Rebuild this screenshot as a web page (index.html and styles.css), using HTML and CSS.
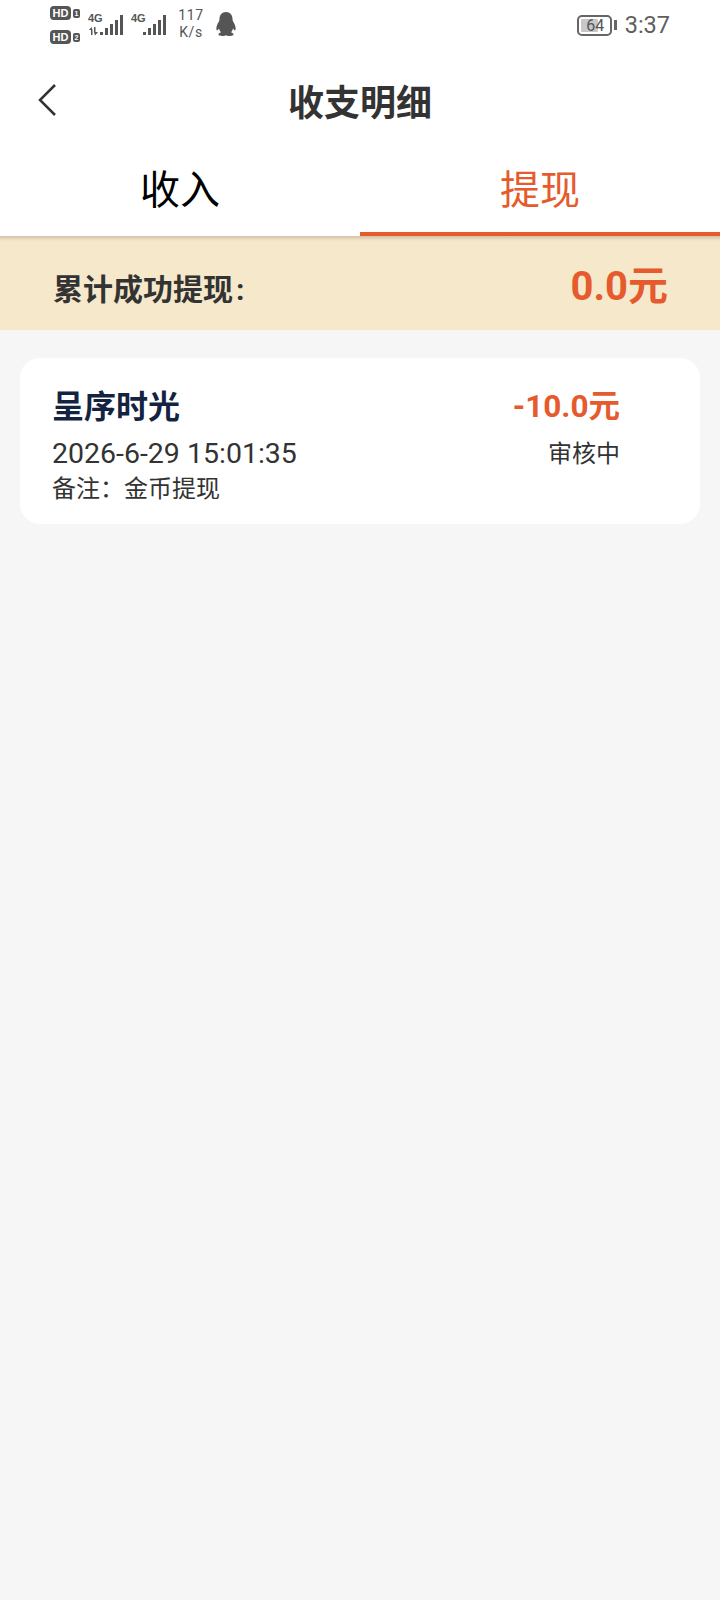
FILE: index.html
```html
<!DOCTYPE html>
<html lang="zh-CN">
<head>
<meta charset="utf-8">
<title>收支明细</title>
<link rel="stylesheet" href="styles.css">
</head>
<body>
<div class="status">
  <div class="status-left">
    <div class="hd-col">
      <div class="hd-row"><span class="hd">HD</span><span class="sim">1</span></div>
      <div class="hd-row"><span class="hd">HD</span><span class="sim">2</span></div>
    </div>
    <svg class="signal" width="36" height="30" viewBox="0 0 36 30" fill="#555">
      <text class="net" x="0" y="11">4G</text>
      <path d="M3 24v-5H1l2.500-3 1 3v5zM6 16h1.500v5H10l-3 3.500-1-3.500z"/>
      <rect x="12" y="21" width="3" height="3"/><rect x="17" y="17" width="3" height="7"/><rect x="22" y="13" width="3" height="11"/><rect x="27" y="9" width="3" height="15"/><rect x="32" y="4" width="3" height="20"/>
    </svg>
    <svg class="signal" width="36" height="30" viewBox="0 0 36 30" fill="#555">
      <text class="net" x="0" y="11">4G</text>
      <rect x="12" y="21" width="3" height="3"/><rect x="17" y="17" width="3" height="7"/><rect x="22" y="13" width="3" height="11"/><rect x="27" y="9" width="3" height="15"/><rect x="32" y="4" width="3" height="20"/>
    </svg>
    <div class="speed"><span>117</span><span>K/s</span></div>
    <svg class="qq" width="22" height="26" viewBox="0 0 22 26" fill="#555">
      <path d="M11 1c-4 0-6.500 3-6.500 7 0 1.500-.5 2.500-1.500 4-1.200 2-2 5-1.500 7 .5.800 1.500 0 2.500-1.500.3 1.500 1 2.800 2 3.700-1.500.6-2.500 1.300-2.500 2.300 0 1.300 3 1.500 5 1.500 1 0 1.700-.3 2.500-.8.800.5 1.500.8 2.500.8 2 0 5-.2 5-1.500 0-1-1-1.700-2.500-2.300 1-.9 1.700-2.200 2-3.700 1 1.500 2 2.300 2.500 1.500.5-2-.3-5-1.500-7-1-1.500-1.500-2.500-1.500-4 0-4-2.500-7-6.500-7z"/>
    </svg>
  </div>
  <div class="status-right">
    <div class="battery"><span class="battery-fill"></span><span class="battery-num">64</span></div>
    <span class="battery-cap"></span>
    <span class="clock">3:37</span>
  </div>
</div>

<header class="nav">
  <svg class="back" width="20" height="34" viewBox="0 0 20 34" fill="none" stroke="#333" stroke-width="2.500">
    <path d="M17 2 2 17l15 15"/>
  </svg>
  <h1 class="title">收支明细</h1>
</header>

<div class="tabs">
  <div class="tab">收入</div>
  <div class="tab tab-active">提现</div>
</div>

<section class="summary">
  <span class="summary-label">累计成功提现<span class="colon">:</span></span>
  <span class="summary-value">0.0元</span>
</section>

<section class="card">
  <div class="card-left">
    <div class="card-name">呈序时光</div>
    <div class="card-date">2026-6-29 15:01:35</div>
    <div class="card-note">备注&#xFF1A;金币提现</div>
  </div>
  <div class="card-right">
    <div class="card-amount">-10.0元</div>
    <div class="card-state">审核中</div>
  </div>
</section>
</body>
</html>
```
FILE: styles.css
```css
* { box-sizing: border-box; }
html, body { margin: 0; padding: 0; }
body {
  width: 720px;
  height: 1600px;
  overflow: hidden;
  background: #f6f6f6;
  font-family: Roboto, "Noto Sans CJK SC", sans-serif;
  color: #333;
}
.status {
  height: 50px;
  background: #fff;
  display: flex;
  justify-content: space-between;
  padding: 5px 50px 0 50px;
  color: #555;
}
.status-left { display: flex; align-items: flex-start; }
.hd-col { display: flex; flex-direction: column; gap: 10px; width: 38px; padding-top: 1px; }
.hd-row { display: flex; align-items: center; gap: 2px; height: 14px; }
.hd {
  background: #555;
  color: #fff;
  border-radius: 4px;
  font: bold 11px/14px "Liberation Sans", sans-serif;
  width: 21px;
  text-align: center;
}
.sim {
  background: #555;
  color: #fff;
  border-radius: 2px;
  font: bold 7px/9px "Liberation Sans", sans-serif;
  width: 7px;
  text-align: center;
}
.signal { margin: 6px 7px 0 0; }
.net { font: bold 11px "Liberation Sans", sans-serif; }
.speed {
  display: flex;
  flex-direction: column;
  align-items: center;
  font-size: 14px;
  line-height: 17px;
  letter-spacing: .6px;
  margin: 2px 9px 0 2px;
  width: 30px;
}
.qq { margin-top: 6px; }
.status-right { display: flex; align-items: center; height: 40px; }
.battery {
  position: relative;
  width: 35px;
  height: 21px;
  border: 2px solid #666;
  border-radius: 5px;
  padding: 2px;
}
.battery-fill { display: block; width: 64%; height: 100%; background: #c8c8c8; border-radius: 1px; }
.battery-num {
  position: absolute;
  inset: 0;
  padding-left: 2px;
  text-align: center;
  font-size: 16px;
  line-height: 17px;
  color: #555;
}
.battery-cap { width: 3px; height: 10px; background: #666; margin: 0 8px 0 2px; }
.clock { font-size: 23.500px; color: #5f5f5f; }
.nav {
  position: relative;
  height: 104px;
  background: #fff;
  display: flex;
  align-items: center;
  justify-content: center;
}
.back { position: absolute; left: 38px; top: 33px; }
.title { margin: 0; padding-top: 4px; font-size: 36px; font-weight: 700; color: #333; line-height: 44px; }
.tabs { display: flex; height: 82px; background: #fff; }
.tab { flex: 1; text-align: center; font-size: 40px; line-height: 52px; padding-top: 11px; color: #000; }
.tab-active { color: #e55b2d; border-bottom: 4px solid #e55b2d; }
.summary {
  height: 94px;
  background: linear-gradient(rgba(120, 100, 70, .28), rgba(120, 100, 70, 0) 5px), #f6e8cb;
  display: flex;
  justify-content: space-between;
  align-items: center;
  padding: 0 52px 0 53px;
}
.summary-label { font-size: 30px; font-weight: 700; color: #333; padding-top: 8px; }
.colon { margin-left: 3px; }
.summary-value { font-size: 40px; font-weight: 700; color: #e55b2d; }
.card {
  margin: 28px 20px 0;
  height: 166px;
  background: #fff;
  border-radius: 20px;
  display: flex;
  justify-content: space-between;
  padding: 29px 80px 0 32px;
}
.card-name { font-size: 32px; font-weight: 700; color: #14233f; line-height: 40px; }
.card-date { font-size: 28.500px; line-height: 36px; margin-top: 9px; }
.card-note { font-size: 24px; line-height: 35px; }
.card-right { text-align: right; }
.card-amount { font-size: 31.500px; font-weight: 700; color: #e55b2d; line-height: 40px; }
.card-state { font-size: 24px; line-height: 36px; margin-top: 9px; }
```
